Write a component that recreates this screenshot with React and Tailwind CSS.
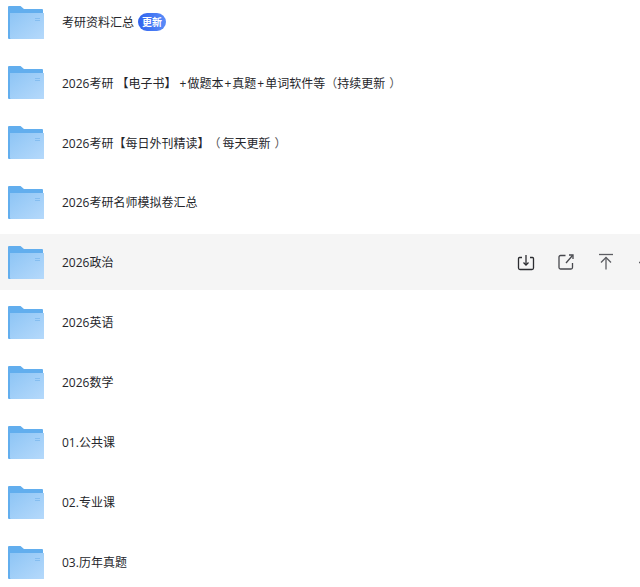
const CJK = "font-['Noto_Sans_CJK_KR','Noto_Sans_CJK_SC',sans-serif]";

function Plus({ first }) {
  return <span className={first ? "ml-[3px] mr-px" : "mx-px"}>+</span>;
}

function Paren({ children, tight }) {
  return (
    <>
      <span className={`text-[#555] ${tight ? "" : "ml-[5px] mr-[2px]"} ${CJK}`}>（</span>
      {children}
      <span className={`text-[#555] ml-[4px] ${CJK}`}>）</span>
    </>
  );
}

const rows = [
  { key: "a", name: "考研资料汇总", badge: true },
  {
    key: "b",
    name: (
      <>
        2026考研 【电子书】<Plus first />做题本<Plus />真题<Plus />单词软件等<Paren tight>持续更新</Paren>
      </>
    ),
  },
  {
    key: "c",
    name: (
      <>
        2026考研【每日外刊精读】<Paren>每天更新</Paren>
      </>
    ),
  },
  { key: "d", name: "2026考研名师模拟卷汇总" },
  { key: "e", name: "2026政治", active: true },
  { key: "f", name: "2026英语" },
  { key: "g", name: "2026数学" },
  { key: "h", name: "01.公共课" },
  { key: "i", name: "02.专业课" },
  { key: "j", name: "03.历年真题" },
];

function Folder() {
  return (
    <svg width="36" height="33" viewBox="0 0 36 33" className="block shrink-0 mt-px">
      <defs>
        <linearGradient id="ff" x1="0" y1="0" x2="1" y2="1">
          <stop offset="0" stopColor="#8ec5f5" />
          <stop offset="1" stopColor="#b5d9fb" />
        </linearGradient>
      </defs>
      <path d="M0 1a1 1 0 0 1 1-1h11.500l3.500 3h18a1 1 0 0 1 1 1v29H1a1 1 0 0 1-1-1z" fill="#62aeee" />
      <path d="M2 7h34v26H3a1 1 0 0 1-1-1z" fill="url(#ff)" />
      <rect x="27" y="12" width="5" height="1" fill="#84bdf0" />
      <rect x="27" y="14" width="5" height="1" fill="#84bdf0" />
    </svg>
  );
}

function Actions() {
  return (
    <div className="flex items-center gap-5 mr-[-16px] shrink-0 text-[#2b2c30]">
      <svg width="20" height="20" viewBox="0 0 20 20" fill="none" stroke="currentColor" strokeWidth="1.300">
        <path d="M6 5.500H3.500a1 1 0 0 0-1 1V16a1.500 1.500 0 0 0 1.500 1.500h12a1.500 1.500 0 0 0 1.500-1.500V6.500a1 1 0 0 0-1-1H14" />
        <path d="M10 3v10" />
        <path d="M7.500 10.500 10 13l2.500-2.500" />
      </svg>
      <svg width="20" height="20" viewBox="0 0 20 20" fill="none" stroke="#47484d" strokeWidth="1.300">
        <path d="M9.500 3.500H4.500a1.500 1.500 0 0 0-1.500 1.500v10.500a1.500 1.500 0 0 0 1.500 1.500h10.500a1.500 1.500 0 0 0 1.500-1.500V11" />
        <path d="M10 11 16.500 3.500" />
        <path d="M13 3h4v4" />
      </svg>
      <svg width="20" height="20" viewBox="0 0 20 20" fill="none" stroke="#5c5d62" strokeWidth="1.300">
        <path d="M3 2.500h14" />
        <path d="M10 5.500V17.500" />
        <path d="M5 10.500 10 5.500 15 10.500" />
      </svg>
      <svg width="20" height="20" viewBox="0 0 20 20" fill="none" stroke="#5c5d62" strokeWidth="1.300">
        <path d="M3 10.500h14" />
      </svg>
    </div>
  );
}

export default function App() {
  return (
    <div className="w-[640px] h-[587px] overflow-hidden bg-white font-['Open_Sans','Noto_Sans_CJK_SC',sans-serif] text-xs text-[#25262b]">
      <div className="flex flex-col gap-1 mt-[-6px]">
        {rows.map((r) => (
          <div key={r.key} className={`flex items-center h-14 pl-2 overflow-hidden ${r.active ? "bg-[#f5f5f5]" : ""}`}>
            <Folder />
            <div className="flex items-center ml-[18px] flex-1 min-w-0">
              <span className="whitespace-nowrap pt-0.5">{r.name}</span>
              {r.badge && (
                <span className="ml-1 h-[18px] w-7 rounded-full bg-gradient-to-r from-[#2f62ee] to-[#5b8cf8] text-white text-[10px] font-bold leading-[18px] text-center">
                  更新
                </span>
              )}
            </div>
            {r.active && <Actions />}
          </div>
        ))}
      </div>
    </div>
  );
}
